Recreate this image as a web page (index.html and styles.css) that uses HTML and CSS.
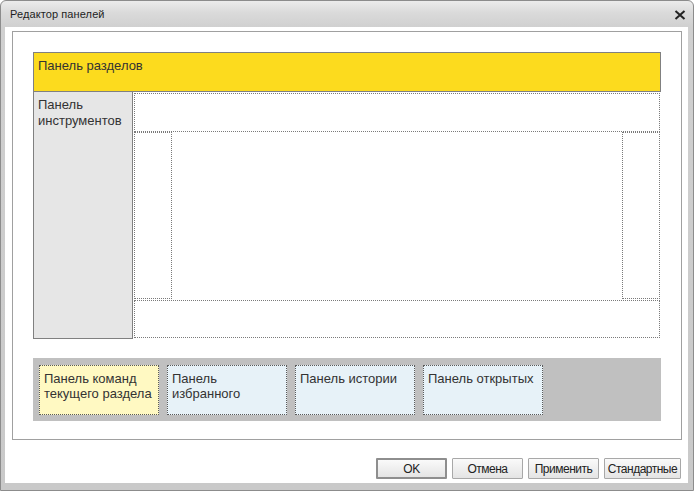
FILE: index.html
```html
<!DOCTYPE html>
<html lang="ru">
<head>
<meta charset="utf-8">
<title>Редактор панелей</title>
<link rel="stylesheet" href="styles.css">
</head>
<body>
<div class="window">
  <div class="titlebar">
    <span class="title">Редактор панелей</span>
    <svg class="close" width="12" height="10" viewBox="0 0 12 10"><path d="M1.5 1 L10.5 9 M10.5 1 L1.5 9" stroke="#222" stroke-width="2" fill="none"/></svg>
  </div>
  <div class="client">
    <div class="frame">
      <div class="editor">
        <div class="header">Панель разделов</div>
        <div class="main">
          <div class="tools">Панель инструментов</div>
          <div class="center">
            <div class="dot top"></div>
            <div class="mid">
              <div class="dot side"></div>
              <div class="dot side"></div>
            </div>
            <div class="dot bottom"></div>
          </div>
        </div>
        <div class="strip">
          <div class="pbox yellow">Панель команд текущего раздела</div>
          <div class="pbox blue">Панель избранного</div>
          <div class="pbox blue">Панель истории</div>
          <div class="pbox blue">Панель открытых</div>
        </div>
      </div>
    </div>
    <div class="buttons">
      <button class="btn default">OK</button>
      <button class="btn">Отмена</button>
      <button class="btn">Применить</button>
      <button class="btn wide">Стандартные</button>
    </div>
  </div>
</div>
</body>
</html>
```

FILE: styles.css
```css
* { box-sizing: border-box; }
html, body { margin: 0; padding: 0; background: #ffffff; }
body { font-family: "Liberation Sans", Arial, sans-serif; }

.window {
  width: 694px;
  height: 491px;
  border: 1px solid #8c8c8c;
  border-radius: 6px 6px 0 0;
  background: linear-gradient(to bottom, #ececec 0px, #dadada 12px, #d0d0d0 26px, #c9c9c9 100%);
  padding: 0 5px 7px 4px;
  display: flex;
  flex-direction: column;
}

.titlebar {
  height: 26px;
  display: flex;
  align-items: center;
  justify-content: space-between;
  padding: 0 2px 1px 5px;
}
.title {
  font-size: 11px;
  color: #1e1e1e;
  letter-spacing: 0.1px;
}
.close { display: block; margin-top: 2px; }

.client {
  flex: 1;
  background: #ffffff;
  padding: 4px 6px 4px 7px;
  display: flex;
  flex-direction: column;
}

.frame {
  height: 409px;
  border: 1px solid #a0a0a0;
  padding: 20px;
}

.editor {
  width: 628px;
  font-size: 13px;
  color: #333333;
}

.header {
  height: 40px;
  border: 1px solid #808080;
  background: #fcdb1e;
  padding: 5px 4px;
  line-height: 16px;
}

.main {
  height: 247px;
  display: flex;
}
.tools {
  width: 100px;
  border: 1px solid #808080;
  border-top: none;
  background: #e6e6e6;
  padding: 5px 4px;
  line-height: 16px;
}
.center {
  flex: 1;
  padding: 1px;
  display: flex;
  flex-direction: column;
  gap: 0;
}
.dot { border: 1px dotted #7a7a7a; }
.top { height: 39px; }
.mid {
  flex: 1;
  display: flex;
  justify-content: space-between;
}
.side { width: 38px; }
.bottom { height: 38px; margin-top: 1px; }

.strip {
  margin-top: 19px;
  height: 63px;
  background: #c0c0c0;
  padding: 7px 6px 6px;
  display: flex;
  gap: 8px;
}
.pbox {
  width: 120px;
  height: 50px;
  border: 1px dotted #5a5a5a;
  padding: 5px 4px;
  line-height: 15px;
  color: #333333;
}
.yellow { background: #fff9c2; }
.blue { background: #e7f2f8; }

.buttons {
  margin-top: 18px;
  display: flex;
  justify-content: flex-end;
  gap: 5px;
  padding-right: 1px;
}
.btn {
  width: 71px;
  height: 21px;
  padding: 0;
  font-family: "Liberation Sans", Arial, sans-serif;
  font-size: 12px;
  letter-spacing: -0.5px;
  color: #222222;
  border: 1px solid #a8a8a8;
  border-radius: 1px;
  background: linear-gradient(to bottom, #fafafa 0%, #efefef 50%, #e4e4e4 100%);
}
.btn.default { border: 2px solid #8e8e8e; }
.btn.wide { width: 77px; }
```
